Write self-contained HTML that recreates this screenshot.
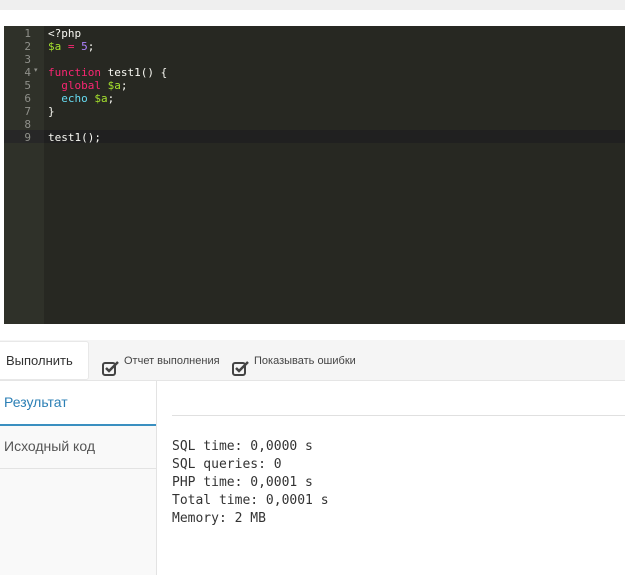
<!DOCTYPE html>
<html><head><meta charset="utf-8"><style>
body{margin:0;width:625px;height:575px;background:#fff;position:relative;overflow:hidden;font-family:"Liberation Sans",sans-serif}
.top{position:absolute;left:0;top:0;width:625px;height:10px;background:#efefef}
.ed{position:absolute;left:4px;top:26px;width:621px;height:298px;background:#272822}
.gut{position:absolute;left:0;top:0;width:40px;height:298px;background:#2f3129}
.act{position:absolute;left:0;top:104px;width:621px;height:13px;background:#202020}
.actg{position:absolute;left:0;top:104px;width:40px;height:13px;background:#272727}
.ln{position:absolute;left:0;top:1px;width:27px;text-align:right;font:11px/13px "DejaVu Sans Mono",monospace;color:#8f908a}
.code{position:absolute;left:44px;top:1px;font:11px/13px "DejaVu Sans Mono",monospace;color:#f8f8f2;white-space:pre}
.k{color:#f92672}.v{color:#a6e22e}.n{color:#ae81ff}.e{color:#66d9ef}
.bar{position:absolute;left:0;top:340px;width:625px;height:40px;background:#f5f5f5;border-bottom:1px solid #e5e5e5}
.btn{position:absolute;left:0;top:1px;width:88px;height:37px;background:#fff;border:1px solid #e8e8e8;border-left:none;border-radius:0 3px 3px 0;font-size:13px;color:#333;line-height:37px;text-indent:6px}
.cb{position:absolute;top:15px;font-size:11px;color:#444}
.cb svg{position:absolute;left:-22px;top:5px}
.left{position:absolute;left:0;top:381px;width:156px;height:194px;background:#f9f9f9;border-right:1px solid #e3e3e3}
.t1{position:absolute;left:0;top:381px;width:156px;height:43px;background:#fff;border-bottom:2px solid #3a8fc0;color:#2b7fb5;font-size:14px;line-height:43px;text-indent:4px}
.t2{position:absolute;left:0;top:426px;width:156px;height:42px;border-bottom:1px solid #e3e3e3;color:#555;font-size:14px;line-height:40px;text-indent:4px}
.hr{position:absolute;left:172px;top:415px;width:453px;height:1px;background:#e0e0e0}
.out{position:absolute;left:172px;top:438px;font:13px/18px "DejaVu Sans Mono",monospace;color:#333;white-space:pre}
</style></head><body>
<div class="top"></div>
<div class="ed"><div class="gut"></div><div class="act"></div><div class="actg"></div>
<div class="ln">1<br>2<br>3<br>4<br>5<br>6<br>7<br>8<br>9</div>
<div style="position:absolute;left:30px;top:40px;font-size:7px;color:#8f908a">▾</div>
<div class="code">&lt;?php
<span class="v">$a</span> <span class="k">=</span> <span class="n">5</span>;

<span class="k">function</span> test1() {
  <span class="k">global</span> <span class="v">$a</span>;
  <span class="e">echo</span> <span class="v">$a</span>;
}

test1();</div></div>
<div class="bar"><div class="btn">Выполнить</div>
<div class="cb" style="left:124px"><svg width="18" height="16" viewBox="0 0 18 16"><rect x="1" y="3" width="12" height="12" rx="2" fill="none" stroke="#444" stroke-width="2"/><path d="M4 8l3 3 9-9" fill="none" stroke="#444" stroke-width="2.5"/></svg>Отчет выполнения</div>
<div class="cb" style="left:254px"><svg width="18" height="16" viewBox="0 0 18 16"><rect x="1" y="3" width="12" height="12" rx="2" fill="none" stroke="#444" stroke-width="2"/><path d="M4 8l3 3 9-9" fill="none" stroke="#444" stroke-width="2.5"/></svg>Показывать ошибки</div>
</div>
<div class="left"></div>
<div class="t1">Результат</div>
<div class="t2">Исходный код</div>
<div class="hr"></div>
<div class="out">SQL time: 0,0000 s
SQL queries: 0
PHP time: 0,0001 s
Total time: 0,0001 s
Memory: 2 MB</div>
</body></html>
